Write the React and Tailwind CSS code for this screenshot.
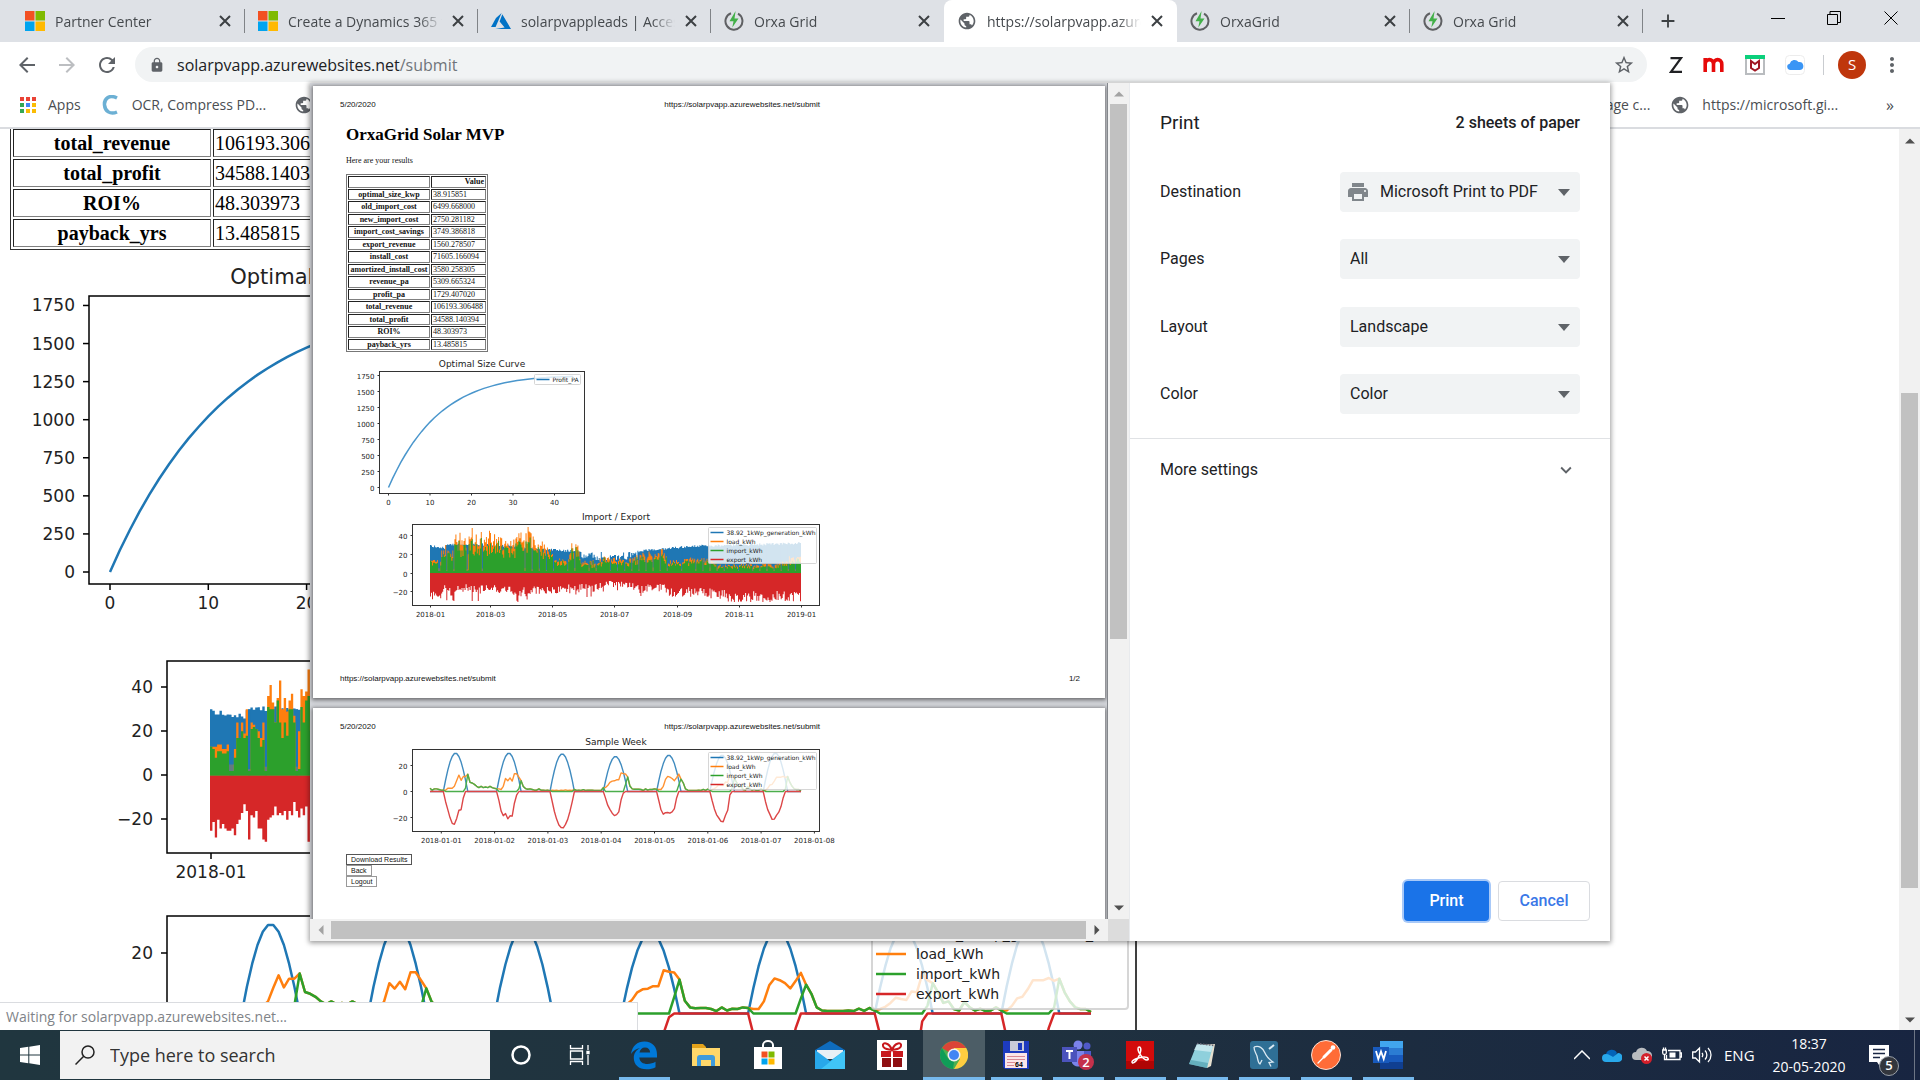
import React from "react";
import {
  MdArrowBack, MdArrowForward, MdRefresh, MdLock, MdPublic, MdStarBorder, MdPrint, MdAdd, MdMoreVert, MdExpandMore,
} from "react-icons/md";

const C = { blue: "#1f77b4", orange: "#ff7f0e", green: "#2ca02c", red: "#d62728" };
const UI = "font-['Open_Sans',sans-serif]";

/* ---------- data ---------- */

const curve = Array.from({ length: 46 }, (_, i) => {
  const x = i === 45 ? 44.5 : i;
  return [x, 1980 * (1 - Math.exp(-x / 13)) - 4.1 * x];
});

const load = [
  2.5, 1, 2, 2, 1.5, 1, 1, 1, 2.5, 2.5, 2.5, 4, 8.5, 12.6, 8.6, 11.5, 11.5, 13.2, 7.1, 6.5, 5.5, 4, 3, 4,
  3, 3.5, 3, 4, 3, 2.5, 2, 2, 1.5, 4, 10, 8.2, 10.5, 8, 13.6, 13.6, 11, 8.3, 3.9, 2.2, 1.8, 2, 1.5, 1,
  1, 2, 1, 1, 0.8, 1, 0.7, 1, 0.8, 1, 0.7, 1, 0.8, 1.2, 0.8, 1, 0.8, 1.5, 0.8, 1, 0.8, 1.4, 0.8, 1,
  1, 1, 0.8, 0.8, 0.8, 0.8, 3, 3, 4.5, 7, 8, 8.2, 9, 9, 14.3, 13.8, 13.5, 11.2, 4.2, 2, 1.7, 1.8, 1.8, 1.5,
  0.8, 2, 1, 1.6, 1.5, 2, 1.8, 1.5, 1.5, 4, 9.3, 11.6, 11, 10, 8.3, 10.7, 13.4, 9.5, 6.5, 2, 1, 0.8, 0.8, 0.8,
  0.8, 1, 0.8, 1.6, 0.9, 1.8, 1, 1.5, 2.2, 3.5, 5.2, 4.8, 4.5, 7.3, 7, 13, 11, 10, 7, 3.5, 4, 1.5, 1, 3.8,
  2, 1, 1.6, 0.8, 1, 2, 1, 1, 2.5, 5, 5.5, 8, 11, 11, 11, 11.7, 10.8, 11.5, 7, 4, 2, 1.5, 1.5, 0.5,
];
const peaks = [29.5, 29.5, 29, 27, 28, 28, 29.5];
const gen = load.map((_, i) => {
  const h = i % 24;
  if (h <= 6 || h >= 17) return 0;
  return peaks[Math.floor(i / 24)] * Math.pow(Math.sin((Math.PI * (h - 6)) / 11), 0.95);
});
const imp = load.map((v, i) => Math.max(0, v - gen[i]));
const exp = load.map((v, i) => Math.min(0, v - gen[i]));

const firstOrange = [13, 13, 13, 14, 14, 12, 12, 14, 5, 5, 12, 24, 17, 24, 19, 30, 3, 24, 23, 21, 20, 17, 24, 4, 36, 41, 33, 24, 35, 43, 30, 35, 29, 34, 37, 27, 4, 20, 39, 36, 38, 48];
const firstGreen = [13, 12, 8, 11, 11, 10, 10, 11, 2, 2, 8, 17, 17, 20, 17, 18, 2, 21, 22, 21, 17, 13, 16, 2, 31, 30, 30, 24, 34, 24, 17, 24, 18, 30, 30, 24, 2, 3, 31, 24, 34, 36];
const firstRed = [25, 21, 28, 20, 24, 22, 24, 25, 25, 24, 27, 22, 20, 17, 13, 16, 29, 18, 19, 16, 24, 24, 29, 30, 20, 19, 18, 14, 18, 17, 18, 16, 20, 16, 18, 12, 16, 19, 15, 18, 14, 30];

const lerp = (pts, x) => {
  for (let i = 1; i < pts.length; i++) {
    if (x <= pts[i][0]) {
      const [a, b] = [pts[i - 1], pts[i]];
      return a[1] + ((b[1] - a[1]) * (x - a[0])) / (b[0] - a[0]);
    }
  }
  return pts[pts.length - 1][1];
};
let seed = 17;
const rnd = () => {
  seed = (seed * 16807) % 2147483647;
  return seed / 2147483647;
};
const blueEnv = [[0, 30], [14, 28], [16, 31], [40, 32], [80, 30], [120, 26], [148, 24], [152, 22], [200, 23], [215, 26], [240, 28], [260, 30], [300, 31], [330, 32], [365, 33]];
const orangeEnv = [[40, 44], [60, 42], [75, 35], [96, 46], [105, 36], [118, 28], [122, 16], [136, 16], [139, 31], [145, 30], [148, 13], [165, 14], [172, 18], [192, 14], [205, 20], [228, 26], [234, 13], [262, 17], [278, 14], [285, 9], [340, 10], [352, 18], [365, 18]];
const redEnv = [[40, 22], [60, 20], [90, 24], [110, 21], [125, 21], [145, 18], [160, 20], [175, 13], [195, 15], [208, 22], [228, 14], [234, 26], [260, 24], [285, 28], [300, 31], [325, 31], [350, 30], [365, 29]];
const year = Array.from({ length: 365 }, (_, i) => {
  const mid = i > 148 && i < 205;
  const b = lerp(blueEnv, i) - (mid ? 9 : 2.5) * rnd();
  if (i < 42) return [b, firstOrange[i], firstGreen[i], firstRed[i]];
  const r = rnd();
  const low = i % 7 === 2 && r < 0.8;
  const o = low ? 3 + 3 * rnd() : lerp(orangeEnv, i) * (0.65 + 0.38 * rnd());
  const g = low ? 2 : o * (0.6 + 0.35 * rnd());
  const d = lerp(redEnv, i) * (0.62 + 0.42 * rnd()) * (rnd() > 0.84 && i < 230 ? 1.35 : 1);
  return [b, o, g, Math.min(d, 31)];
});
year[58] = [30, 45, 20, 18];
year[96] = [28, 49, 33, 22];

/* ---------- chart parts ---------- */

const poly = (p) => "M" + p.map(([x, y]) => `${x.toFixed(1)} ${y.toFixed(1)}`).join("L");

function Axes({ box, xt, yt, big, title }) {
  const [l, t, r, b] = box;
  const n = big ? 6 : 2;
  const ink = big ? "#000" : "#333";
  const sw = big ? 1.5 : 1;
  return (
    <g fontFamily="DejaVu Sans, sans-serif" fontSize={big ? 17 : 7} fill="#222">
      <rect x={l} y={t} width={r - l} height={b - t} fill="none" stroke={ink} strokeWidth={sw} />
      {xt.map(([x, s]) => (
        <g key={s}>
          <path d={`M${x} ${b}v${n}`} stroke={ink} strokeWidth={sw} />
          <text x={x} y={b + (big ? 25 : 11)} textAnchor="middle">{s}</text>
        </g>
      ))}
      {yt.map(([y, s]) => (
        <g key={s}>
          <path d={`M${l} ${y}h${-n}`} stroke={ink} strokeWidth={sw} />
          <text x={l - (big ? 14 : 5)} y={y + (big ? 6 : 3)} textAnchor="end">{s}</text>
        </g>
      ))}
      {title && <text x={(l + r) / 2} y={t - (big ? 12 : 5)} fontSize={big ? 21 : 9} textAnchor="middle">{title}</text>}
    </g>
  );
}

function Legend({ box, rows, big }) {
  const [l, t, r, b] = box;
  const pitch = big ? 20 : 9;
  const first = big ? 20 : 5;
  return (
    <g fontFamily="DejaVu Sans, sans-serif" fontSize={big ? 14 : 6} fill="#222">
      <rect x={l} y={t} width={r - l} height={b - t} rx={big ? 3 : 1} fill="#fff" fillOpacity="0.8" stroke="#ccc" strokeOpacity="0.8" strokeWidth={big ? 2 : 1} />
      {rows.map(([c, s], i) => (
        <g key={s}>
          <path d={`M${l + (big ? 4 : 2)} ${t + first + i * pitch}h${big ? 30 : 13}`} stroke={c} strokeWidth={big ? 2.5 : 1.5} />
          <text x={l + (big ? 44 : 18)} y={t + first + i * pitch + (big ? 5 : 2)}>{s}</text>
        </g>
      ))}
    </g>
  );
}

const legendRows = [[C.blue, "38.92_1kWp_generation_kWh"], [C.orange, "load_kWh"], [C.green, "import_kWh"], [C.red, "export_kWh"]];

function YearBars({ x0, w, y0, k }) {
  const p = w / 365;
  const area = (f) => "M" + x0 + " " + y0 + year.map((d, i) => `V${(y0 - f(d) * k).toFixed(1)}H${(x0 + (i + 1) * p).toFixed(1)}`).join("") + `V${y0}Z`;
  return (
    <g>
      <path d={area((d) => d[0])} fill={C.blue} />
      <path d={area((d) => d[1])} fill={C.orange} />
      <path d={area((d) => (d[1] < 6 ? d[0] : 0))} fill={C.blue} opacity="0.7" />
      <path d={area((d) => d[2])} fill={C.green} />
      <path d={area((d) => -d[3])} fill={C.red} />
      <path d={`M${x0} ${y0 - k / 2}h${w}`} stroke={C.green} strokeWidth={k} />
    </g>
  );
}

function WeekLines({ x0, w, y0, k, sw }) {
  const line = (s) => poly(s.map((v, i) => [x0 + (i * w) / 167, y0 - v * k]));
  return (
    <g fill="none" strokeWidth={sw} strokeLinejoin="round">
      <path d={line(gen)} stroke={C.blue} />
      <path d={line(load)} stroke={C.orange} />
      <path d={line(imp)} stroke={C.green} />
      <path d={line(exp)} stroke={C.red} />
    </g>
  );
}

/* ---------- icons ---------- */

const WinLogo = () => (
  <svg width="20" height="20" viewBox="0 0 20 20" className="shrink-0">
    <path fill="#f25022" d="M0 0h9.5v9.5H0z" /><path fill="#7fba00" d="M10.5 0H20v9.5h-9.5z" />
    <path fill="#00a4ef" d="M0 10.500h9.500V20H0z" /><path fill="#ffb900" d="M10.500 10.500H20V20h-9.500z" />
  </svg>
);
const Azure = () => (
  <svg width="20" height="20" viewBox="0 0 20 20" className="shrink-0" fill="#0072c6">
    <path d="M10.600 2 5 7 0 16h4.600z" /><path d="M11.300 3.200 8.600 10.400l5 6L4.400 18H20z" />
  </svg>
);
const Orxa = () => (
  <svg width="20" height="20" viewBox="0 0 20 20" className="shrink-0">
    <path d="M7 2.200A8.500 8.500 0 1 0 14 2.700" fill="none" stroke="#5f6063" strokeWidth="2" />
    <path d="M11.600 0 5.500 10.300h4L8.300 16.500l6.200-9h-4z" fill="#43b049" />
  </svg>
);
const Globe = () => <MdPublic size={20} className="shrink-0 text-[#5f6368]" />;

const taskIcons = {
  Edge: (
    <svg width="30" height="30" viewBox="0 0 30 30"><path fill="#0078d7" d="M2 14C3 6 8.500 1.500 15.500 1.500 23.500 1.500 28 7 28 14.500V17.500H10.300C10.700 22 14 24 18.500 24c3 0 5.800-.9 8-2.200v5.400C24 28.600 21 29.300 17.600 29.300 9.500 29.300 4.800 24.500 4.800 18c0-4.500 2.500-8.200 6.400-10C7.500 8.500 4 10.800 2 14Zm8.500-1.400h10.600C21.100 9.500 19.300 7.500 16 7.500c-3 0-5 2.100-5.500 5.100Z" /></svg>
  ),
  Files: (
    <svg width="28" height="26" viewBox="0 0 28 26"><path fill="#e3a21a" d="M0 2h11l3 3v4H0z" /><path fill="#ffd76a" d="M0 6h28v18H0z" /><path fill="#3f9bdc" d="M5 24v-8a3 3 0 0 1 3-3h12a3 3 0 0 1 3 3v8h-4v-6H9v6z" /></svg>
  ),
  Store: (
    <svg width="30" height="30" viewBox="0 0 30 30"><path fill="none" stroke="#fff" strokeWidth="2" d="M10 8V5a5 4 0 0 1 10 0v3" /><path fill="#fff" d="M1 7h28v22H1z" /><path fill="#f25022" d="M8.500 11.500h6v6h-6z" /><path fill="#7fba00" d="M15.500 11.500h6v6h-6z" /><path fill="#00a4ef" d="M8.500 18.500h6v6h-6z" /><path fill="#ffb900" d="M15.500 18.500h6v6h-6z" /></svg>
  ),
  Mail: (
    <svg width="30" height="28" viewBox="0 0 30 28"><path fill="#0f6cbd" d="M0 9 15 0l15 9v5H0z" /><path fill="#e8f0f5" d="M2 9h26v9H2z" /><path fill="#28a8ea" d="m0 9 15 11L30 9v19H0z" /><path fill="#50d9ff" d="M30 9 6 28h24z" opacity=".6" /></svg>
  ),
  Gift: (
    <svg width="30" height="30" viewBox="0 0 30 30"><path fill="#fff" d="M0 0h30v30H0z" /><path fill="#c8191e" d="M4 11h10v6H4zM16 11h10v6H16z" /><path fill="#8f0f12" d="M5 18h9v9H5zM16 18h9v9h-9z" /><path fill="none" stroke="#c8191e" strokeWidth="2" d="M15 10C12 2 5 2 6 6s6 3 9 4c3-1 8 0 9-4s-6-4-9 4Z" /></svg>
  ),
  Chrome: (
    <svg width="28" height="28" viewBox="0 0 28 28"><circle cx="14" cy="14" r="14" fill="#4caf50" /><path fill="#db4437" d="M14 14 2 7a14 14 0 0 1 24.200 0z" /><path fill="#ffcd40" d="M14 14V7h12.200A14 14 0 0 1 14 28l6-10z" /><path fill="#0f9d58" d="M1.900 7 8 17.500 14 21l-1 7A14 14 0 0 1 1.900 7" /><circle cx="14" cy="14" r="6.500" fill="#f1f1f1" /><circle cx="14" cy="14" r="5" fill="#4285f4" /></svg>
  ),
  Floppy: (
    <svg width="28" height="28" viewBox="0 0 28 28"><path fill="#1d3bbf" d="M1 0h26v28H3l-2-2z" /><path fill="#c9ccd8" d="M8 0h14v10H8z" /><path fill="#1d3bbf" d="M16 2h4v7h-4z" /><path fill="#fbe6e8" d="M3 12h22v15H3z" /><path stroke="#d98a94" d="M5 15.500h18M5 18.500h18M5 21.500h8M5 24.500h7" /><text x="13" y="26" fontSize="7" fontWeight="700" fontFamily="Liberation Sans">64</text></svg>
  ),
  Teams: (
    <svg width="34" height="30" viewBox="0 0 34 30"><circle cx="17" cy="5" r="4.500" fill="#7b83eb" /><circle cx="26" cy="6" r="3.500" fill="#5059c9" /><path fill="#7b83eb" d="M10 11h14v9a7 7 0 0 1-13 3z" /><path fill="#5059c9" d="M23 11h7v7a5 5 0 0 1-7 4z" /><path fill="#4b53bc" d="M1 7h15v15H1z" /><path stroke="#fff" strokeWidth="2" d="M5 11h7M8.500 11v8" /><circle cx="25" cy="22" r="8" fill="#c4314b" /><text x="25" y="27" fontSize="13" fontWeight="600" fill="#fff" textAnchor="middle" fontFamily="Open Sans">2</text></svg>
  ),
  Acrobat: (
    <svg width="28" height="28" viewBox="0 0 28 28"><path fill="#d30b0b" d="M0 0h28v28H0z" /><path fill="#8c0000" d="M0 20h28v8H0z" opacity=".5" /><path fill="none" stroke="#fff" strokeWidth="1.500" d="M13 6c3 0 2 6-1 11s-6 6-6 4 7-5 12-5 5 3 3 3c-4 0-9-8-9-11 0-1 .3-2 1-2Z" /></svg>
  ),
  Notepad: (
    <svg width="28" height="28" viewBox="0 0 28 28"><path fill="#e6e0cf" d="m10 4 17-1-4 22-4 2z" /><path fill="#8fd0dc" d="M9 3 25 5l-6 22L1 23z" /><path fill="#d9f1f5" d="M9 3 25 5l-2 6L6 9z" opacity=".7" /><path stroke="#667" strokeWidth="1.500" strokeDasharray="1.500 1.500" d="m9 2.500 17 2" /><path fill="#4a99a8" d="M3 19 20 22l-1 5L1 23z" opacity=".6" /></svg>
  ),
  Workbench: (
    <svg width="28" height="28" viewBox="0 0 28 28"><rect width="28" height="28" rx="3" fill="#2f6f95" /><path fill="none" stroke="#dbe9f2" strokeWidth="1.300" d="M4 6c5-2 9 1 11 6 1.500 4 4 6 8 9l-4 .5 2 4M4 6c0 4 2 6 3 9 1 4 1 7 3 8l2-4" /><path stroke="#dbe9f2" strokeWidth="2" d="m19 8 5-4" /></svg>
  ),
  Postman: (
    <svg width="30" height="30" viewBox="0 0 30 30"><circle cx="15" cy="15" r="14.500" fill="#ff6c37" stroke="#fbe0d4" /><path stroke="#fff" strokeWidth="3" strokeLinecap="round" d="m13 17 7-7" /><path stroke="#fff" strokeWidth="1.300" strokeLinecap="round" d="m7 23 6-6" /><circle cx="22" cy="7.500" r="2.300" fill="#fff" /></svg>
  ),
  Word: (
    <svg width="30" height="28" viewBox="0 0 30 28"><path fill="#41a5ee" d="M7 0h23v7H7z" /><path fill="#2b7cd3" d="M7 7h23v7H7z" /><path fill="#185abd" d="M7 14h23v7H7z" /><path fill="#103f91" d="M7 21h23v7H7z" /><path fill="#185abd" d="M0 6h16v16H0z" /><path fill="none" stroke="#fff" strokeWidth="1.800" d="m3 10 2.300 8L8 10.500l2.700 7.500L13 10" /></svg>
  ),
};

/* ---------- browser chrome ---------- */

const tabs = [
  [<WinLogo />, "Partner Center"],
  [<WinLogo />, "Create a Dynamics 365 trial"],
  [<Azure />, "solarpvappleads | Access keys"],
  [<Orxa />, "Orxa Grid"],
  [<Globe />, "https://solarpvapp.azurewebsites.net"],
  [<Orxa />, "OrxaGrid"],
  [<Orxa />, "Orxa Grid"],
];

function Tab({ icon, title, active, sep }) {
  return (
    <div className={`flex h-full w-[233px] min-w-0 items-center gap-2.5 pr-3.5 pl-[13px] ${active ? "rounded-t-lg bg-white" : ""} ${sep ? "relative after:absolute after:right-0 after:h-6 after:w-px after:bg-[#808387]" : ""}`}>
      {icon}
      <span className="min-w-0 flex-1 overflow-hidden text-[14px] whitespace-nowrap text-[#45494d] [mask-image:linear-gradient(to_right,#000_85%,transparent)]">{title}</span>
      <button aria-label="Close tab"><svg width="12" height="12"><path d="m1 1 10 10M11 1 1 11" stroke="#3c4043" strokeWidth="2" /></svg></button>
    </div>
  );
}

function Header() {
  return (
    <header className={`shrink-0 ${UI}`}>
      <div className="flex h-[42px] items-center bg-[#dee1e6] pl-3">
        {tabs.map(([icon, title], i) => (
          <Tab key={i} icon={icon} title={title} active={i === 4} sep={i !== 3 && i !== 4} />
        ))}
        <button aria-label="New tab" className="ml-3.5"><MdAdd size={22} className="text-[#3c4043]" /></button>
        <div className="ml-auto flex items-center self-start pt-2 text-black">
          <button aria-label="Minimize" className="flex w-14 justify-center"><svg width="14" height="20"><path d="M0 10.500h14" stroke="#000" /></svg></button>
          <button aria-label="Restore" className="flex w-14 justify-center"><svg width="14" height="14" fill="none" stroke="#000"><path d="M.5 3.500h10v10H.5zM3 3.500v-3h10.500v11h-3" /></svg></button>
          <button aria-label="Close" className="flex w-[58px] justify-center"><svg width="14" height="14"><path d="m.5.5 13 13m0-13-13 13" stroke="#000" /></svg></button>
        </div>
      </div>
      <div className="flex items-center bg-white pt-[5px] pr-4 pl-[15px]">
        <button aria-label="Back"><MdArrowBack size={24} className="text-[#5f6368]" /></button>
        <button aria-label="Forward" className="ml-4"><MdArrowForward size={24} className="text-[#bcbec1]" /></button>
        <button aria-label="Reload" className="ml-4"><MdRefresh size={24} className="text-[#5f6368]" /></button>
        <div className="ml-4 flex h-[35px] flex-1 items-center rounded-full bg-[#f1f3f4] pr-3 pl-3.5">
          <MdLock size={16} className="text-[#5f6368]" />
          <div className="relative ml-3 flex-1 text-[16px] leading-6">
            <span aria-hidden="true" className="pointer-events-none absolute inset-0 text-[#202124]">solarpvapp.azurewebsites.net<span className="text-[#70757a]">/submit</span></span>
            <input aria-label="Address" className="block w-full bg-transparent text-transparent outline-none" />
          </div>
          <button aria-label="Bookmark this page"><MdStarBorder size={22} className="text-[#5f6368]" /></button>
        </div>
        <div className="ml-[21px] flex items-center gap-5">
          <svg width="14" height="16" className="ml-px"><path d="M1.500 1.200h10.500L2 14.800h11" fill="none" stroke="#202124" strokeWidth="2.200" /></svg>
          <svg width="22" height="16" viewBox="0 0 22 16"><path d="M2.200 1v14M2.200 7.500c0-6.500 8.300-6.500 8.300 0V15M10.500 7.500c0-6.500 8.300-6.500 8.300 0V15" fill="none" stroke="#e60a0a" strokeWidth="3.600" /></svg>
          <svg width="20" height="20" viewBox="0 0 20 20"><path fill="#fff" stroke="#b9bcbf" strokeWidth="2" d="M1 1h18v18H1z" /><path fill="#0bd07c" d="M0 0h20v4H0z" /><path d="M6 6v7l4 2.500 4-2.500V6l-4 3z" fill="none" stroke="#a01722" strokeWidth="2" /></svg>
          <svg width="20" height="20" viewBox="0 0 20 20"><rect x=".5" y=".5" width="19" height="19" rx="4" fill="#fff" stroke="#ececec" /><path d="M5 15a3.200 3.200 0 0 1-.3-6.300A5 5 0 0 1 13.500 7 4 4 0 0 1 15 15z" fill="#3a95f5" /></svg>
        </div>
        <div className="ml-[18px] h-5 w-px bg-[#c9ccd0]" />
        <button aria-label="Profile" className="ml-3.5 flex size-7 items-center justify-center rounded-full bg-[#bf360c] text-[15px] text-white">S</button>
        <button aria-label="Menu" className="ml-3.5"><MdMoreVert size={24} className="text-[#5f6368]" /></button>
      </div>
      <nav className="flex h-[47px] items-center border-b-2 border-[#dadce0] bg-white pr-[26px] pl-5 text-[14px] text-[#4a4e52]">
        <svg width="16" height="16" viewBox="0 0 16 16">
          <path fill="#ea4335" d="M0 0h4v4H0zM6 0h4v4H6zM12 0h4v4h-4z" /><path fill="#34a853" d="M0 6h4v4H0zM0 12h4v4H0z" />
          <path fill="#4285f4" d="M6 6h4v4H6z" /><path fill="#fbbc04" d="M12 6h4v4h-4zM6 12h4v4H6zM12 12h4v4h-4z" />
        </svg>
        <a href="#apps" className="ml-3">Apps</a>
        <svg width="16" height="20" viewBox="0 0 16 20" className="ml-[21px]"><path d="M15 3C7-1 2 4 2.500 10S8 20 15 17" fill="none" stroke="#6cb0d4" strokeWidth="3.500" /></svg>
        <a href="#ocr" className="mr-7 ml-3.5">OCR, Compress PD...</a>
        <Globe />
        <a href="#page" className="mr-5 ml-auto">Page c...</a>
        <Globe />
        <a href="#microsoft" className="ml-3">https://microsoft.gi...</a>
        <button aria-label="More bookmarks" className="ml-12 text-[16px]">»</button>
      </nav>
    </header>
  );
}

/* ---------- results page ---------- */

const results = [
  ["optimal_size_kwp", "38.915851"], ["old_import_cost", "6499.668000"], ["new_import_cost", "2750.281182"],
  ["import_cost_savings", "3749.386818"], ["export_revenue", "1560.278507"], ["install_cost", "71605.166094"],
  ["amortized_install_cost", "3580.258305"], ["revenue_pa", "5309.665324"], ["profit_pa", "1729.407020"],
  ["total_revenue", "106193.306488"], ["total_profit", "34588.140394"], ["ROI%", "48.303973"], ["payback_yrs", "13.485815"],
];
const kwTicks = [0, 250, 500, 750, 1000, 1250, 1500, 1750];
const cell = "border border-t-[#222] border-l-[#222] border-r-[#808080] border-b-[#808080]";

function ResultsPage() {
  return (
    <div className="flex min-w-0 flex-1 flex-col items-start overflow-hidden">
      <table className="-mt-0.5 ml-2.5 shrink-0 border-separate border-spacing-0.5 border-x border-b border-[#333] font-['Liberation_Serif',serif] text-[20px] leading-6">
        <tbody>
          {results.slice(9).map(([k, v]) => (
            <tr key={k}>
              <th className={`w-[198px] p-px ${cell}`}>{k}</th>
              <td className={`w-[130px] p-px ${cell}`}>{v}</td>
            </tr>
          ))}
        </tbody>
      </table>
      <svg width="620" height="390" viewBox="0 250 620 390" className="block shrink-0">
        <Axes big box={[89, 296, 573, 584]} title="Optimal Size Curve"
          xt={[0, 10, 20, 30, 40].map((v) => [110 + v * 9.83, v])} yt={kwTicks.map((v) => [572 - v * 0.1523, v])} />
        <path d={poly(curve.map(([x, y]) => [110 + x * 9.83, 572 - y * 0.1523]))} fill="none" stroke={C.blue} strokeWidth="2.500" />
      </svg>
      <svg width="1200" height="260" viewBox="0 640 1200 260" className="block shrink-0">
        <YearBars x0={210} w={868} y0={775.5} k={2.21} />
        <Axes big box={[167, 661, 1136, 853]} xt={[[211, "2018-01"]]} yt={[[687, "40"], [731, "20"], [775, "0"], [819, "−20"]]} />
      </svg>
      <svg width="1200" height="220" viewBox="0 900 1200 220" className="block shrink-0">
        <WeekLines x0={210} w={881} y0={1013.5} k={3.03} sw={2.5} />
        <Axes big box={[167, 916, 1136, 1108]} xt={[]} yt={[[953, "20"]]} />
        <Legend big box={[872, 914, 1128, 1009]} rows={legendRows} />
      </svg>
    </div>
  );
}

const Arrow = ({ d, c = "#505050" }) => (
  <svg width="10" height="10" viewBox="0 0 10 10" className="shrink-0" fill={c}>
    <path d={{ up: "M0 7.500 5 2.500l5 5z", down: "M0 2.500h10l-5 5z", left: "M7.500 0v10l-5-5z", right: "M2.500 0v10l5-5z" }[d]} />
  </svg>
);

/* ---------- print dialog ---------- */

const url = "https://solarpvapp.azurewebsites.net/submit";
const sheet = "bg-white shadow-[0_1px_4px_1px_rgba(0,0,0,0.5)] pl-[27px] font-['Liberation_Sans',sans-serif] text-[8px] leading-[10px] text-[#111]";

function PageHead() {
  return (
    <div className="flex w-[480px] justify-between pt-3.5">
      <span>5/20/2020</span>
      <span>{url}</span>
    </div>
  );
}

function Preview() {
  return (
    <div className="flex w-[819px] shrink-0 flex-col">
      <div className="flex min-h-0 flex-1">
        <div className="flex min-w-0 flex-1 flex-col gap-2.5 overflow-hidden border-r border-[#85888d] bg-[#d3d5da] pt-[3px] pr-0.5 pl-[3px]">
          <section className={`flex h-[612px] shrink-0 flex-col ${sheet}`}>
            <PageHead />
            <div className="pl-1.5 font-['Liberation_Serif',serif]">
              <h1 className="mt-[15px] text-[17px] leading-5 font-bold text-black">OrxaGrid Solar MVP</h1>
              <p className="mt-[11px]">Here are your results</p>
              <table className="mt-2 h-[178px] w-[142px] border-separate border-spacing-px border border-[#777] leading-[9px]">
                <tbody>
                  <tr><th className={cell} /><th className={`pr-px text-right ${cell}`}>Value</th></tr>
                  {results.map(([k, v]) => (
                    <tr key={k}><th className={`whitespace-nowrap ${cell}`}>{k}</th><td className={`pl-px ${cell}`}>{v}</td></tr>
                  ))}
                </tbody>
              </table>
            </div>
            <svg width="500" height="156" viewBox="340 352 500 156" className="block">
              <Axes box={[379.5, 371.5, 584.5, 493.5]} title="Optimal Size Curve"
                xt={[0, 10, 20, 30, 40].map((v) => [388.5 + v * 4.15, v])} yt={kwTicks.map((v) => [487.5 - v * 0.064, v])} />
              <path d={poly(curve.map(([x, y]) => [388.5 + x * 4.15, 487.5 - y * 0.064]))} fill="none" stroke="#4a96cc" strokeWidth="1.500" />
              <Legend box={[534.5, 374.5, 580.5, 384.5]} rows={[[C.blue, "Profit_PA"]]} />
            </svg>
            <svg width="500" height="112" viewBox="340 508 500 112" className="block">
              <YearBars x0={430} w={371} y0={573} k={0.937} />
              <Axes box={[412.5, 524.5, 819.5, 605.5]} title="Import / Export"
                xt={[[430.5, "2018-01"], [490.5, "2018-03"], [552.5, "2018-05"], [614.5, "2018-07"], [677.5, "2018-09"], [739.5, "2018-11"], [801.5, "2019-01"]]}
                yt={[[535.5, "40"], [554.5, "20"], [573.5, "0"], [591.5, "−20"]]} />
              <Legend box={[708.5, 527.5, 816.5, 563.5]} rows={legendRows} />
            </svg>
            <div className="mt-auto flex w-[740px] justify-between pb-3.5"><span>{url}</span><span>1/2</span></div>
          </section>
          <section className={`h-[612px] shrink-0 ${sheet}`}>
            <PageHead />
            <svg width="500" height="118" viewBox="340 732 500 118" className="block">
              <g opacity="0.85"><WeekLines x0={430} w={371} y0={791.5} k={1.3} sw={1.4} /></g>
              <Axes box={[412.5, 749.5, 819.5, 831.5]} title="Sample Week"
                xt={[1, 2, 3, 4, 5, 6, 7, 8].map((n) => [388 + n * 53.3, `2018-01-0${n}`])} yt={[[765.5, "20"], [791.5, "0"], [817.5, "−20"]]} />
              <Legend box={[708.5, 752.5, 816.5, 789.5]} rows={legendRows} />
            </svg>
            <div className="flex flex-col items-start pt-1 pl-1.5 text-[7px] leading-[9px]">
              <button className="border border-[#555] px-1">Download Results</button>
              <button className="border border-[#999] px-1">Back</button>
              <button className="border border-[#999] px-1">Logout</button>
            </div>
          </section>
        </div>
        <div className="flex w-[21px] flex-col items-center bg-[#f1f1f1]">
          <div className="flex h-[21px] items-center"><Arrow d="up" c="#a3a3a3" /></div>
          <div className="h-[535px] w-[17px] bg-[#c1c1c1]" />
          <div className="mt-auto flex h-[22px] items-center"><Arrow d="down" /></div>
        </div>
      </div>
      <div className="flex h-[22px] bg-[#f1f1f1]">
        <div className="flex w-[21px] items-center justify-center"><Arrow d="left" c="#a3a3a3" /></div>
        <div className="my-[2px] flex-1 bg-[#c1c1c1]" />
        <div className="flex w-[22px] items-center justify-center"><Arrow d="right" /></div>
        <div className="w-[21px] bg-[#dcdcdc]" />
      </div>
    </div>
  );
}

function Field({ label, value, icon }) {
  const id = label.toLowerCase();
  return (
    <div className="flex items-center justify-between">
      <label htmlFor={id}>{label}</label>
      <div className="relative w-60">
        {icon && <MdPrint size={24} className="absolute top-2 left-1.5 text-[#80868b]" />}
        <select id={id} className={`h-10 w-full appearance-none rounded bg-[#f1f3f4] ${icon ? "pl-10" : "pl-2.5"}`}><option>{value}</option></select>
        <svg width="12" height="7" className="pointer-events-none absolute top-[17px] right-2.5"><path d="M0 0h12L6 7z" fill="#5f6368" /></svg>
      </div>
    </div>
  );
}

function PrintDialog() {
  return (
    <div className="pointer-events-none absolute inset-x-0 top-[83px] z-10 flex justify-center">
      <div role="dialog" aria-label="Print" className="pointer-events-auto flex h-[858px] w-full max-w-[1300px] bg-white shadow-[0_1px_5px_1px_rgba(0,0,0,0.4)]">
        <Preview />
        <form className="flex flex-1 flex-col border-l border-[#e8eaed] font-['Roboto',sans-serif] text-[16px] text-[#202124]">
          <div className="flex items-center justify-between px-[30px] pt-[26px]">
            <h2 className="text-[19px] leading-7">Print</h2>
            <span className="font-medium">2 sheets of paper</span>
          </div>
          <div className="mt-[35px] flex h-[242px] flex-col justify-between px-[30px]">
            <Field label="Destination" value="Microsoft Print to PDF" icon />
            <Field label="Pages" value="All" />
            <Field label="Layout" value="Landscape" />
            <Field label="Color" value="Color" />
          </div>
          <button type="button" className="mt-6 flex h-[62px] items-center justify-between border-t border-[#e0e2e5] pr-[33px] pl-[30px]">
            More settings <MdExpandMore size={22} className="text-[#5f6368]" />
          </button>
          <div className="mt-auto flex justify-end gap-[9px] pr-5 pb-5 text-[16px] font-medium">
            <button type="button" className="h-10 w-[85px] rounded bg-[#1a73e8] text-white ring-2 ring-[#a8c9f8]">Print</button>
            <button type="button" className="h-10 w-[92px] rounded border border-[#dadce0] text-[#3b78e7]">Cancel</button>
          </div>
        </form>
      </div>
    </div>
  );
}

/* ---------- taskbar ---------- */

function Taskbar() {
  return (
    <footer className={`flex h-[50px] shrink-0 items-stretch bg-linear-to-r from-[#20363f] via-[#20323f] to-[#182541] text-white ${UI}`}>
      <button aria-label="Start" className="flex w-[60px] items-center justify-center">
        <svg width="20" height="20" viewBox="0 0 20 20" fill="#fff"><path d="M0 3 8.300 1.800v7.700H0zM9.300 1.700 20 0v9.500H9.300zM0 10.500h8.300v7.700L0 17zM9.300 10.500H20V20L9.300 18.300z" /></svg>
      </button>
      <label className="my-px flex w-[430px] items-center bg-[#f2f2f2] pl-[15px]">
        <svg width="20" height="20" viewBox="0 0 20 20" fill="none" stroke="#222" strokeWidth="1.500"><circle cx="13" cy="7" r="6" /><path d="M8.700 11.300.5 19.500" /></svg>
        <input aria-label="Search" placeholder="Type here to search" className="ml-[15px] flex-1 bg-transparent text-[18px] outline-none placeholder:text-[#333]" />
      </label>
      <button aria-label="Cortana" className="flex w-[61px] items-center justify-center"><svg width="20" height="20"><circle cx="10" cy="10" r="8.500" fill="none" stroke="#fff" strokeWidth="2.500" /></svg></button>
      <button aria-label="Task view" className="flex w-[62px] items-center justify-center pr-1"><svg width="22" height="20" fill="none" stroke="#fff" strokeWidth="1.300"><path d="M1.500 0v3.500h12V0M1.500 20v-3.500h12V20M1.500 6h12v8h-12zM19 0v5M19 10v10" /><path fill="#fff" d="M18 6.500h2v2h-2z" /></svg></button>
      {Object.entries(taskIcons).map(([name, icon]) => (
        <button key={name} aria-label={name} className={`flex w-[62px] flex-col items-center ${name === "Chrome" ? "bg-[#4c5d66]" : ""}`}>
          <span className="flex flex-1 items-center pt-[3px]">{icon}</span>
          <span className={`h-[3px] ${["Files", "Store", "Mail", "Gift"].includes(name) ? "w-0" : name === "Chrome" ? "w-full bg-[#76b9ed]" : "w-[51px] bg-[#76b9ed]"}`} />
        </button>
      ))}
      <div className="ml-auto flex items-center pr-[5px]">
        <svg width="16" height="10" fill="none" stroke="#fff" strokeWidth="1.500"><path d="m0 9 8-8 8 8" /></svg>
        <svg width="20" height="13" viewBox="0 0 20 13" className="ml-3"><path fill="#0364b8" d="M4 5a6 6 0 0 1 11-1l-3 4-8 2z" /><path fill="#28a8ea" d="M4 13a4 4 0 0 1 0-8c3 0 5 2 7 3l5-4a4.500 4.500 0 0 1 0 9z" /></svg>
        <svg width="20" height="17" viewBox="0 0 20 17" className="ml-2.5"><path fill="#b9bcc0" d="M4 13a4 4 0 0 1 0-8 6 6 0 0 1 11-1 4.500 4.500 0 0 1 1 9z" /><circle cx="14.500" cy="11.500" r="5.500" fill="#d3202b" /><path stroke="#fff" strokeWidth="1.500" d="m12.500 9.500 4 4m0-4-4 4" /></svg>
        <svg width="20" height="16" viewBox="0 0 20 16" className="ml-2.5" fill="none" stroke="#fff" strokeWidth="1.300"><path d="M6 3.500h12v9H4.500V8M18 6h1.500v4H18M.7 3v3c0 2 3.600 2 3.600 0V3zM1.500 3V.5M3.500 3V.5M2.500 8v4.500h2" /><path fill="#fff" stroke="none" d="M7.500 5.500h6v5h-6z" /></svg>
        <svg width="20" height="18" viewBox="0 0 20 18" className="ml-2.5" fill="none" stroke="#fff" strokeWidth="1.300"><path d="M.7 6v6h2.800l4 4V2l-4 4zM10 7c1 1 1 3 0 4M13 4.500c2.500 2.500 2.500 6.500 0 9M16 2c4 4 4 10 0 14" /></svg>
        <span className="ml-3 w-[30px] text-[15px]">ENG</span>
        <div className="ml-[13px] w-[84px] text-center text-[14px] leading-[23px]"><div>18:37</div><div>20-05-2020</div></div>
        <button aria-label="Notifications" className="relative ml-[18px] flex size-[34px] items-center">
          <svg width="20" height="20" viewBox="0 0 20 20"><path fill="#fff" d="M0 0h20v17h-6l-4 3-2-3H0z" /><path stroke="#1a2744" strokeWidth="1.300" d="M4 4.500h12M4 8.500h12M4 12.500h7" /></svg>
          <span className="absolute right-1 -bottom-1 flex size-5 items-center justify-center rounded-full border border-[#9aa0a8] bg-[#33363d] text-[13px] font-semibold">5</span>
        </button>
        <div className="ml-[11px] h-[50px] w-px bg-[#6d7685]" />
      </div>
    </footer>
  );
}

export default function App() {
  return (
    <div className="relative flex h-screen flex-col overflow-hidden bg-white">
      <Header />
      <main className="relative flex min-h-0 flex-1">
        <ResultsPage />
        <div className="flex w-[21px] shrink-0 flex-col items-center bg-[#f1f1f1]">
          <div className="flex h-6 items-center"><Arrow d="up" /></div>
          <div className="mt-60 h-[495px] w-[17px] bg-[#c1c1c1]" />
          <div className="mt-auto flex h-5 items-center"><Arrow d="down" /></div>
        </div>
        <div className={`absolute bottom-0 left-0 flex h-7 w-[638px] items-center border-t border-r border-[#dadce0] bg-white pl-1.5 text-[14px] text-[#808388] ${UI}`}>
          Waiting for solarpvapp.azurewebsites.net...
        </div>
      </main>
      <Taskbar />
      <PrintDialog />
    </div>
  );
}
